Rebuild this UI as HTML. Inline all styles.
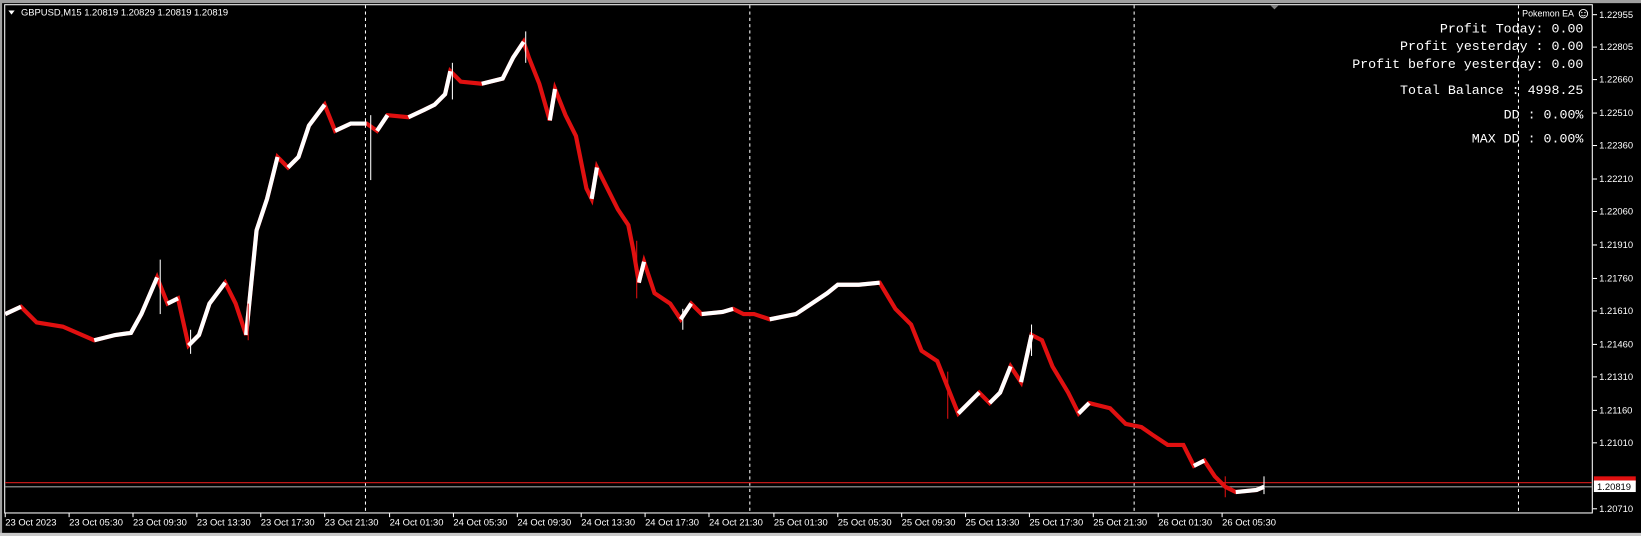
<!DOCTYPE html>
<html><head><meta charset="utf-8">
<style>
html,body{margin:0;padding:0;background:#000;overflow:hidden}
svg{display:block}
</style></head>
<body>
<svg width="1641" height="536" viewBox="0 0 1567 512" preserveAspectRatio="none" xmlns="http://www.w3.org/2000/svg">
<rect x="0" y="0" width="1567" height="512" fill="#000"/>
<rect x="0" y="0" width="1567" height="3" fill="#a0a0a0"/>
<rect x="0" y="0" width="2" height="512" fill="#a0a0a0"/>
<rect x="0" y="509" width="1567" height="3" fill="#c8c8c8"/>
<rect x="4.5" y="4.5" width="1516" height="485.5" fill="none" stroke="#fff" stroke-width="1"/>
<g stroke="#fff" stroke-width="1" stroke-dasharray="3,3">
<line x1="349" y1="5" x2="349" y2="490"/>
<line x1="716" y1="5" x2="716" y2="490"/>
<line x1="1083" y1="5" x2="1083" y2="490"/>
<line x1="1450" y1="5" x2="1450" y2="490"/>
</g>
<polygon points="1213,5 1221,5 1217,9" fill="#808080"/>
<line x1="5" y1="461" x2="1520" y2="461" stroke="#c01818" stroke-width="1.2"/>
<line x1="5" y1="465" x2="1520" y2="465" stroke="#a0a0a0" stroke-width="1"/>
<polyline fill="none" stroke="#e01010" stroke-width="4" stroke-linejoin="miter" points="5,300 20,293 35,308 60,312 90,325 110,320 125,318 135,300 150,265 160,290 170,285 180,330 190,320 200,290 215,270 225,290 235,320 240,270 245,220 255,190 265,150 275,160 285,150 295,120 310,100 320,125 335,118 350,118 360,125 370,110 390,112 405,105 415,100 425,90 430,68 440,78 460,80 480,75 490,55 500,40 505,55 515,80 525,115 530,85 540,110 550,130 560,180 565,190 570,160 580,180 590,200 600,215 605,240 610,270 615,250 625,280 640,290 650,305 660,290 670,300 690,298 700,295 710,300 720,300 735,305 760,300 775,290 790,280 800,272 820,272 840,270 855,295 870,310 880,335 895,345 905,370 915,395 925,385 935,375 945,385 955,375 965,350 975,365 985,320 995,325 1005,350 1020,375 1030,395 1040,385 1060,390 1075,405 1090,408 1100,415 1115,425 1130,425 1140,445 1150,440 1160,455 1170,465 1180,470 1200,468 1207,465"/>
<path fill="none" stroke="#fff" stroke-width="4" d="M5,300L20,293 M90,325L110,320L125,318L135,300L150,265 M160,290L170,285 M180,330L190,320L200,290L215,270 M235,320L240,270L245,220L255,190L265,150 M275,160L285,150L295,120L310,100 M320,125L335,118L350,118 M360,125L370,110 M390,112L405,105L415,100L425,90L430,68 M460,80L480,75L490,55L500,40 M525,115L530,85 M565,190L570,160 M610,270L615,250 M650,305L660,290 M670,300L690,298L700,295 M735,305L760,300L775,290L790,280L800,272L820,272L840,270 M915,395L925,385L935,375 M945,385L955,375L965,350 M975,365L985,320 M1030,395L1040,385 M1140,445L1150,440 M1180,470L1200,468L1207,465"/>
<g stroke="#fff" stroke-width="1">
<line x1="153" y1="248" x2="153" y2="300"/><line x1="182" y1="315" x2="182" y2="338"/>
<line x1="354" y1="110" x2="354" y2="172"/><line x1="502" y1="30" x2="502" y2="60"/>
<line x1="432" y1="60" x2="432" y2="95"/><line x1="985" y1="310" x2="985" y2="340"/>
<line x1="1207" y1="455" x2="1207" y2="472"/><line x1="652" y1="295" x2="652" y2="315"/>
</g>
<g stroke="#e01010" stroke-width="1">
<line x1="237" y1="290" x2="237" y2="325"/><line x1="608" y1="230" x2="608" y2="285"/>
<line x1="1170" y1="455" x2="1170" y2="475"/><line x1="905" y1="355" x2="905" y2="400"/>
</g>
<g stroke="#fff" stroke-width="1">
<line x1="1521" y1="14" x2="1525" y2="14"/><line x1="1521" y1="45" x2="1525" y2="45"/><line x1="1521" y1="76" x2="1525" y2="76"/><line x1="1521" y1="108" x2="1525" y2="108"/><line x1="1521" y1="139" x2="1525" y2="139"/><line x1="1521" y1="171" x2="1525" y2="171"/><line x1="1521" y1="202" x2="1525" y2="202"/><line x1="1521" y1="234" x2="1525" y2="234"/><line x1="1521" y1="266" x2="1525" y2="266"/><line x1="1521" y1="297" x2="1525" y2="297"/><line x1="1521" y1="329" x2="1525" y2="329"/><line x1="1521" y1="360" x2="1525" y2="360"/><line x1="1521" y1="392" x2="1525" y2="392"/><line x1="1521" y1="423" x2="1525" y2="423"/><line x1="1521" y1="486" x2="1525" y2="486"/>
<line x1="5" y1="490" x2="5" y2="494"/><line x1="66" y1="490" x2="66" y2="494"/><line x1="127" y1="490" x2="127" y2="494"/><line x1="188" y1="490" x2="188" y2="494"/><line x1="249" y1="490" x2="249" y2="494"/><line x1="310" y1="490" x2="310" y2="494"/><line x1="372" y1="490" x2="372" y2="494"/><line x1="433" y1="490" x2="433" y2="494"/><line x1="494" y1="490" x2="494" y2="494"/><line x1="555" y1="490" x2="555" y2="494"/><line x1="616" y1="490" x2="616" y2="494"/><line x1="677" y1="490" x2="677" y2="494"/><line x1="739" y1="490" x2="739" y2="494"/><line x1="800" y1="490" x2="800" y2="494"/><line x1="861" y1="490" x2="861" y2="494"/><line x1="922" y1="490" x2="922" y2="494"/><line x1="983" y1="490" x2="983" y2="494"/><line x1="1044" y1="490" x2="1044" y2="494"/><line x1="1106" y1="490" x2="1106" y2="494"/><line x1="1167" y1="490" x2="1167" y2="494"/>
</g>
<g fill="#fff" font-family="Liberation Sans, sans-serif" font-size="9">
<text x="1527" y="17">1.22955</text><text x="1527" y="48">1.22805</text><text x="1527" y="79">1.22660</text><text x="1527" y="111">1.22510</text><text x="1527" y="142">1.22360</text><text x="1527" y="174">1.22210</text><text x="1527" y="205">1.22060</text><text x="1527" y="237">1.21910</text><text x="1527" y="269">1.21760</text><text x="1527" y="300">1.21610</text><text x="1527" y="332">1.21460</text><text x="1527" y="363">1.21310</text><text x="1527" y="395">1.21160</text><text x="1527" y="426">1.21010</text><text x="1527" y="489">1.20710</text>
</g>
<rect x="1522" y="455" width="40" height="6" fill="#e01010"/>
<rect x="1522" y="459" width="40" height="11" fill="#fff"/>
<text x="1525" y="468" fill="#000" font-family="Liberation Sans, sans-serif" font-size="9">1.20819</text>
<g fill="#fff" font-family="Liberation Sans, sans-serif" font-size="9">
<text x="5" y="502">23 Oct 2023</text><text x="66" y="502">23 Oct 05:30</text><text x="127" y="502">23 Oct 09:30</text><text x="188" y="502">23 Oct 13:30</text><text x="249" y="502">23 Oct 17:30</text><text x="310" y="502">23 Oct 21:30</text><text x="372" y="502">24 Oct 01:30</text><text x="433" y="502">24 Oct 05:30</text><text x="494" y="502">24 Oct 09:30</text><text x="555" y="502">24 Oct 13:30</text><text x="616" y="502">24 Oct 17:30</text><text x="677" y="502">24 Oct 21:30</text><text x="739" y="502">25 Oct 01:30</text><text x="800" y="502">25 Oct 05:30</text><text x="861" y="502">25 Oct 09:30</text><text x="922" y="502">25 Oct 13:30</text><text x="983" y="502">25 Oct 17:30</text><text x="1044" y="502">25 Oct 21:30</text><text x="1106" y="502">26 Oct 01:30</text><text x="1167" y="502">26 Oct 05:30</text>
</g>
<polygon points="8,10 14,10 11,14" fill="#fff"/>
<text x="20" y="15" fill="#fff" font-family="Liberation Sans, sans-serif" font-size="9">GBPUSD,M15  1.20819 1.20829 1.20819 1.20819</text>
<text x="1503" y="16" fill="#fff" font-family="Liberation Sans, sans-serif" font-size="8.5" text-anchor="end">Pokemon EA</text>
<circle cx="1512" cy="13" r="4" fill="none" stroke="#fff" stroke-width="0.9"/>
<circle cx="1510.5" cy="12" r="0.6" fill="#fff"/><circle cx="1513.5" cy="12" r="0.6" fill="#fff"/>
<path d="M1510,14.3 Q1512,16.3 1514,14.3" fill="none" stroke="#fff" stroke-width="0.7"/>
<g fill="#fff" font-family="Liberation Mono, monospace" font-size="12.7" text-anchor="end">
<text x="1512" y="31">Profit Today: 0.00</text>
<text x="1512" y="48">Profit yesterday : 0.00</text>
<text x="1512" y="65">Profit before yesterday: 0.00</text>
<text x="1512" y="90">Total Balance : 4998.25</text>
<text x="1512" y="113">DD : 0.00%</text>
<text x="1512" y="136">MAX DD : 0.00%</text>
</g>
</svg>
</body></html>
